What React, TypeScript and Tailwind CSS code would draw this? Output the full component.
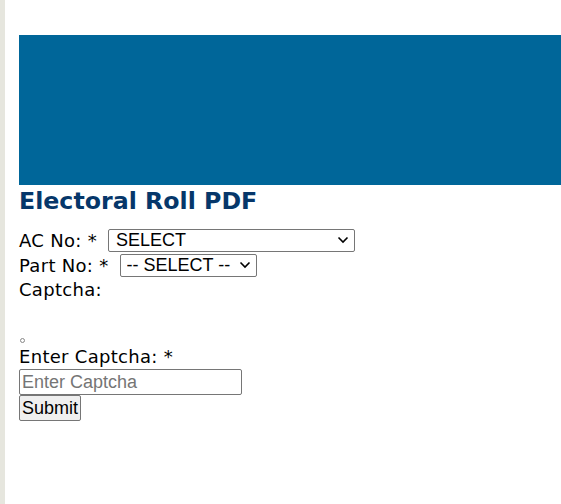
function Chevron() {
  return (
    <svg
      width="12"
      height="8"
      viewBox="0 0 12 8"
      className="pointer-events-none absolute right-[6px] top-1/2 -translate-y-1/2"
    >
      <path d="M1.5 1.5 L6 6 L10.5 1.5" fill="none" stroke="#000" strokeWidth="1.6" />
    </svg>
  );
}

export default function App() {
  return (
    <div className="min-h-[504px] flex bg-white">
      {/* left page strip */}
      <div className="w-[5px] shrink-0 bg-[#e6e6de]" />
      <div className="flex-1 pl-[14px] pt-[35px] font-['DejaVu_Sans',sans-serif] text-[18px] leading-[21px] text-black">
        <div className="h-[150px] bg-[#006699]" />
        <h1 className="mt-[1px] text-[23.7px] leading-[30px] font-bold text-[#06376a]">Electoral Roll PDF</h1>
        <form className="mt-[12px]">
          <div className="flex items-center h-[24px]">
            <label className="tracking-[0.3px]">AC No: *</label>
            <div className="relative ml-[11px]">
              <select className="block appearance-none w-[247px] h-[23px] border border-[#767676] rounded-[2px] bg-white font-['Liberation_Sans',Arial,sans-serif] text-[18px] leading-[20px] pl-[7px] text-black">
                <option>SELECT</option>
              </select>
              <Chevron />
            </div>
          </div>
          <div className="flex items-center h-[24px] mt-[1px]">
            <label className="tracking-[0.3px]">Part No: *</label>
            <div className="relative ml-[11px]">
              <select className="block appearance-none w-[137px] h-[23px] border border-[#767676] rounded-[2px] bg-white font-['Liberation_Sans',Arial,sans-serif] text-[18px] leading-[20px] pl-[6px] text-black">
                <option>-- SELECT --</option>
              </select>
              <Chevron />
            </div>
          </div>
          <div className="mt-[2px] tracking-[0.3px]">Captcha:</div>
          <div className="h-[38px]" />
          <div className="w-[5px] h-[5px] rounded-full border border-[#888] ml-[1px]" />
          <div className="mt-[3px] tracking-[0.3px]">Enter Captcha: *</div>
          <input
            placeholder="Enter Captcha"
            className="block mt-[2px] w-[223px] h-[26px] border border-[#767676] rounded-[2px] px-[2px] font-['Liberation_Sans',Arial,sans-serif] text-[18px] placeholder:text-[#757575]"
          />
          <button
            type="button"
            className="block h-[26px] px-[2px] border border-[#767676] rounded-[2px] bg-[#efefef] font-['Liberation_Sans',Arial,sans-serif] text-[18px] leading-[20px] text-black"
          >
            Submit
          </button>
        </form>
      </div>
    </div>
  );
}
